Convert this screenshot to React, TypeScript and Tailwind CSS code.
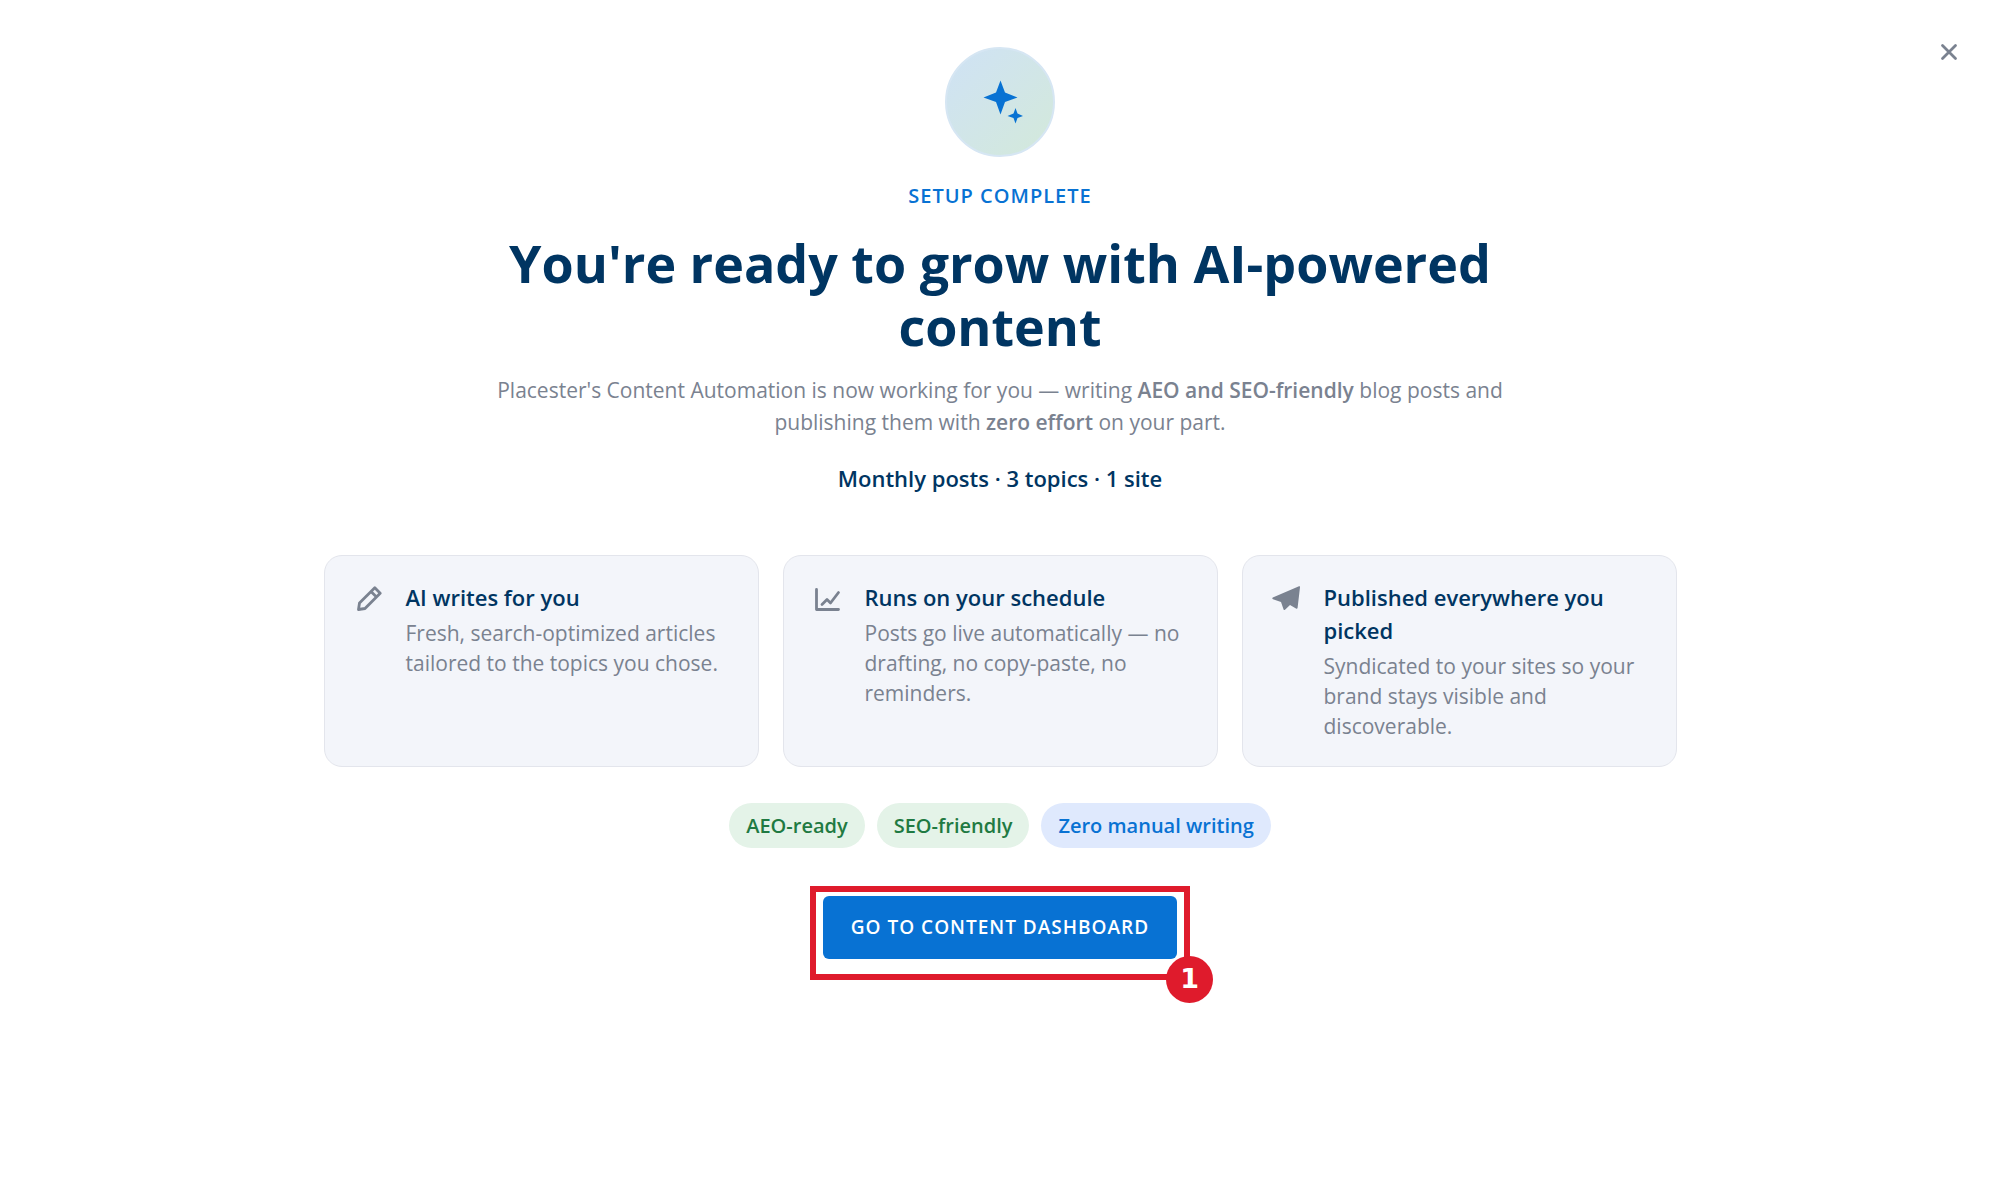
import { ReactNode } from 'react';

interface Feature {
  title: string;
  text: string;
  icon: ReactNode;
}

function SparklesIcon() {
  return (
    <svg viewBox="0 0 56 56" className="h-14 w-14" fill="currentColor" aria-hidden="true">
      <path d="M28.5 6.5 33 18.5 45.5 23.5 33 28 28.5 40.5 24 28 11.5 23.5 24 18.5Z" />
      <path d="M43.5 34 45.5 39.5 51 42 45.5 44 43.5 49.5 41.5 44 35.5 42 41.5 39.5Z" />
    </svg>
  );
}

function PencilIcon() {
  return (
    <svg
      viewBox="0 0 28 28"
      className="h-7 w-7"
      fill="none"
      stroke="currentColor"
      strokeWidth="2.8"
      strokeLinejoin="round"
      aria-hidden="true"
    >
      <path d="M4.5 24.5 5.5 18 20.8 2.8 26.2 8.2 11 23.5Z M17 6.5 22.5 12" />
    </svg>
  );
}

function ChartIcon() {
  return (
    <svg
      viewBox="0 0 28 28"
      className="h-7 w-7"
      fill="none"
      stroke="currentColor"
      strokeWidth="2.8"
      strokeLinecap="round"
      strokeLinejoin="round"
      aria-hidden="true"
    >
      <path d="M3.5 4.5V24.5H25.5" />
      <path d="M9 19.5 14 14.5 17.5 18 25.5 7.5" />
    </svg>
  );
}

function PlaneIcon() {
  return (
    <svg viewBox="0 0 28 28" className="h-7 w-7" fill="currentColor" aria-hidden="true">
      <path d="M0.8 12.6 27 1.3Q28.2 0.9 28 2.2L25.6 22.8Q25.3 24.3 24 23.6L18 20 13 24.8Q12 25.5 11.6 24.4L9 17 1 14.3Q-0.4 13.4 0.8 12.6Z" />
    </svg>
  );
}

const features: Feature[] = [
  {
    title: 'AI writes for you',
    text: 'Fresh, search-optimized articles tailored to the topics you chose.',
    icon: <PencilIcon />,
  },
  {
    title: 'Runs on your schedule',
    text: 'Posts go live automatically — no drafting, no copy-paste, no reminders.',
    icon: <ChartIcon />,
  },
  {
    title: 'Published everywhere you picked',
    text: 'Syndicated to your sites so your brand stays visible and discoverable.',
    icon: <PlaneIcon />,
  },
];

const tags = [
  { name: 'AEO-ready', className: 'bg-[#e4f3e8] text-[#1f7a42]' },
  { name: 'SEO-friendly', className: 'bg-[#e4f3e8] text-[#1f7a42]' },
  { name: 'Zero manual writing', className: 'bg-[#dfe9fd] text-[#0872d3]' },
];

export default function App() {
  return (
    <div className="relative min-h-screen bg-white font-['Open_Sans',sans-serif] text-[#7a8290]">
      <button type="button" aria-label="Close" className="absolute top-[39px] right-[38px] p-1">
        <svg
          viewBox="0 0 18 18"
          className="h-[18px] w-[18px]"
          stroke="currentColor"
          strokeWidth="2.8"
          strokeLinecap="round"
          aria-hidden="true"
        >
          <path d="M2.5 2.5 15.5 15.5M15.5 2.5 2.5 15.5" />
        </svg>
      </button>

      <main className="mx-auto flex max-w-[1353px] flex-col items-center pt-[47px] text-center">
        <div className="flex h-[110px] w-[110px] items-center justify-center rounded-full border-2 border-[#d6e6f3] bg-linear-135 from-[#cfe2f5] to-[#d3e9da] text-[#0872d3]">
          <SparklesIcon />
        </div>

        <p className="mt-6 text-[20px] leading-[30px] font-semibold tracking-[1px] text-[#0872d3]">SETUP COMPLETE</p>

        <h1 className="mt-5 max-w-[1060px] text-[52px] leading-[63px] font-bold text-[#003562]">
          You're ready to grow with AI-powered content
        </h1>

        <p className="mt-[17px] max-w-[1060px] text-[21px] leading-8">
          Placester's Content Automation is now working for you — writing{' '}
          <strong className="font-semibold">AEO and SEO-friendly</strong> blog posts and publishing them with{' '}
          <strong className="font-semibold">zero effort</strong> on your part.
        </p>

        <p className="mt-6 text-[22px] leading-[33px] font-semibold text-[#003562]">
          Monthly posts · 3 topics · 1 site
        </p>

        <ul className="mt-[60px] grid w-full grid-cols-3 gap-6 text-left">
          {features.map((feature) => (
            <li
              key={feature.title}
              className="flex gap-6 rounded-[18px] border border-[#e3e5ec] bg-[#f3f5fa] px-[29px] py-[25px]"
            >
              <div className="mt-1 shrink-0">{feature.icon}</div>
              <div>
                <h2 className="text-[22px] leading-[33px] font-semibold text-[#003562]">{feature.title}</h2>
                <p className="mt-1 text-[21px] leading-[30px]">{feature.text}</p>
              </div>
            </li>
          ))}
        </ul>

        <ul className="mt-9 flex flex-wrap justify-center gap-3">
          {tags.map((tag) => (
            <li
              key={tag.name}
              className={`rounded-full px-[17px] py-2 text-[20px] leading-[29px] font-semibold ${tag.className}`}
            >
              {tag.name}
            </li>
          ))}
        </ul>

        <div className="relative mt-[38px] border-6 border-[#df1b2c] px-[7px] pt-1 pb-[15px]">
          <button
            type="button"
            className="block h-[63px] rounded-md bg-[#0872d3] px-7 text-[19px] font-semibold tracking-[1px] text-white"
          >
            GO TO CONTENT DASHBOARD
          </button>
          <span className="absolute -right-[29px] -bottom-[29px] flex h-[47px] w-[47px] items-center justify-center rounded-full bg-[#df1b2c] font-['DejaVu_Sans',sans-serif] text-[27px] font-bold text-white">
            1
          </span>
        </div>
      </main>
    </div>
  );
}
